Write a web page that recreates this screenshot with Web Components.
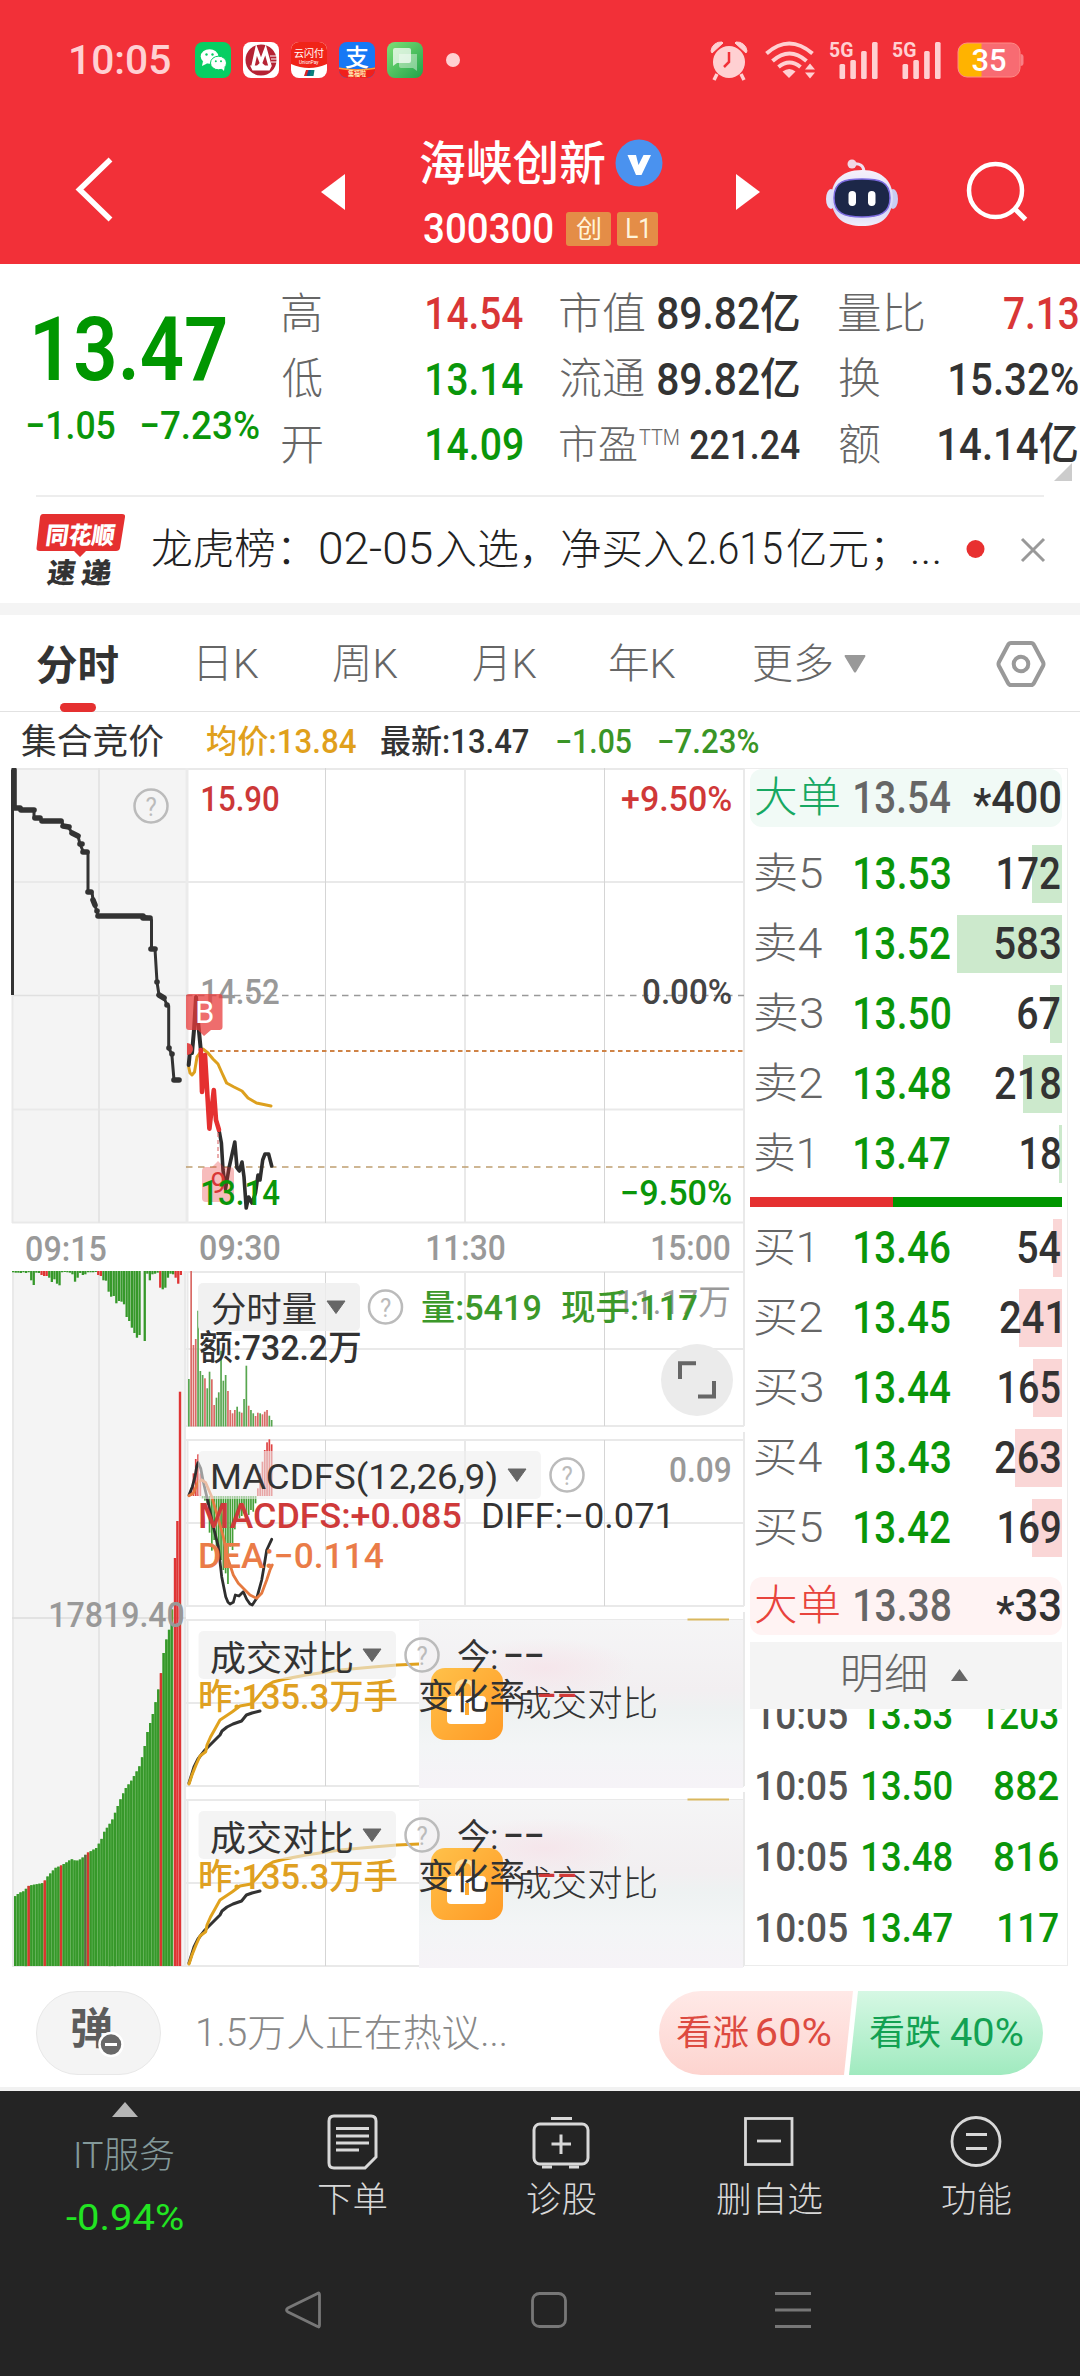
<!DOCTYPE html>
<html lang="zh-CN">
<head>
<meta charset="utf-8">
<title>海峡创新 300300</title>
<style>
html,body{margin:0;padding:0;background:#fff}
body{width:1080px;height:2376px;overflow:hidden;font-family:Roboto,"Noto Sans CJK SC",sans-serif}
</style>
</head>
<body>
<stock-page></stock-page>
<script>
const FONT = 'Roboto,"Noto Sans CJK SC",sans-serif';
const ctx = document.createElement('canvas').getContext('2d');
/* Ink extents of a run of text, used to set it to an exact width. */
function ink(text, size, weight, style = '') {
  ctx.font = `${style} ${weight} ${size}px ${FONT}`;
  const m = ctx.measureText(text);
  return { l: -m.actualBoundingBoxLeft, w: m.actualBoundingBoxRight + m.actualBoundingBoxLeft };
}
/* SVG text from x1 to x2 on a baseline. */
function T(x1, x2, y, size, text, fill, weight = 500) {
  const k = ink(text, size, weight), s = (x2 - x1) / k.w;
  return `<text transform="translate(${(x1 - k.l * s).toFixed(2)} ${y}) scale(${s.toFixed(4)} 1)" font-family='${FONT}' font-size="${size}" font-weight="${weight}" fill="${fill}">${text}</text>`;
}
function define(name, css, html) {
  const t = document.createElement('template');
  customElements.define(name, class extends HTMLElement {
    constructor() {
      super();
      const body = typeof html === 'function' ? '' : html;
      t.innerHTML = `<style>:host{display:block}*{box-sizing:border-box}svg{display:block;flex:none}.r{display:flex;align-items:center}${css}</style>${body}`;
      this.attachShadow({ mode: 'open' }).appendChild(t.content.cloneNode(true));
    }
    connectedCallback() {
      if (typeof html === 'function' && !this.done) { this.done = 1; this.shadowRoot.innerHTML += html(this); }
    }
  });
}

/* <t-fit w m s c b>: text w wide (ink), m left margin, s size, c colour, b weight */
customElements.define('t-fit', class extends HTMLElement {
  connectedCallback() {
    if (this.shadowRoot) return;
    const a = (n, d) => this.getAttribute(n) ?? d;
    const w = +a('w'), s = +a('s', 44), b = a('b', 500), st = a('i', '');
    const k = ink(this.textContent, s, b, st), f = w / k.w;
    this.attachShadow({ mode: 'open' }).innerHTML = `<style>:host{display:block;flex:none;width:${w}px;height:${s}px;margin-left:${a('m', 0)}px}
span{display:block;width:${w}px;white-space:pre;font:${st} ${b} ${s}px/${s}px ${FONT};color:${a('c', 'inherit')};transform-origin:0 50%;transform:scaleX(${f}) translateX(${-k.l}px)}</style><span><slot></slot></span>`;
  }
});

const P = '#ffd0d2';
const signal = `<svg width="51" height="38" viewBox="0 0 51 38">${T(0, 22.5, 16, 20.5, '5G', P, 700)}<g fill="${P}"><rect x="9.5" y="23" width="5.6" height="15" rx="1.5"/><rect x="20.3" y="19" width="5.6" height="19" rx="1.5"/><rect x="31.1" y="10" width="5.6" height="28" rx="1.5"/><rect x="42" y="1" width="5.6" height="37" rx="1.5"/></g></svg>`;
define('status-bar', `:host{height:120px;background:#f23038}svg{overflow:visible}.r{height:120px;color:${P}}.i{width:36px;height:36px;margin-right:12.1px}`, `
<div class="r"><t-fit m="70.5" w="99" s="41" b="500">10:05</t-fit>
<svg class="i" style="margin-left:25.5px" viewBox="0 0 36 36"><rect width="36" height="36" rx="8" fill="#07ce63"/><ellipse cx="14.5" cy="14.5" rx="8.8" ry="7.3" fill="#fff"/><path d="M8 19l-1 5 5-2.5z" fill="#fff"/><ellipse cx="23.5" cy="21" rx="8" ry="6.8" fill="#fff" stroke="#07ce63" stroke-width="1"/><path d="M26 26l3 3 .6-4z" fill="#fff"/><g fill="#07ce63"><circle cx="11.5" cy="12.5" r="1.2"/><circle cx="17.5" cy="12.5" r="1.2"/><circle cx="20.8" cy="19.3" r="1"/><circle cx="26" cy="19.3" r="1"/></g></svg>
<svg class="i" viewBox="0 0 36 36"><rect width="36" height="36" rx="8" fill="#fff"/><circle cx="18" cy="18" r="15.5" fill="#b52334"/><path d="M10 24L13.500 8L18 20L22.500 8L27 24" fill="none" stroke="#fff" stroke-width="3.400"/><path d="M7 23.500h7l4-3.500 4 3.500h7l-2.500 5H9.500z" fill="#fff"/><path d="M27 14h6M28 17h6M28 20h6" stroke="#fff"/></svg>
<svg class="i" viewBox="0 0 36 36"><rect width="36" height="36" rx="8" fill="#fff"/><path d="M0 8a8 8 0 018-8h20a8 8 0 018 8v14q-18 8-36 0z" fill="#f02418"/>${T(3, 33, 15, 10, '云闪付', '#fff', 400)}${T(8, 28, 21.500, 5, 'UnionPay', '#fff', 400)}<path d="M15 28h3l-1 6h-4z" fill="#d22"/><path d="M17.500 28h3l-1 6h-4z" fill="#15558c"/><path d="M20 28h3.500l-1 6h-4z" fill="#0b7f7c"/></svg>
<svg class="i" viewBox="0 0 36 36"><rect width="36" height="36" rx="8" fill="#1678f5"/><path d="M0 25.500q18 3 36 0v3a8 8 0 01-8 7.500H8a8 8 0 01-8-7.500z" fill="#f0201c"/><path d="M0 25.500q18 3.500 36 0v1.500q-18 3.500-36 0z" fill="#f8a03c"/>${T(6, 30, 24, 24, '支', '#fff', 500)}${T(9, 27, 34, 7, '集福啦', '#ffe9b0', 700)}</svg>
<svg class="i" viewBox="0 0 36 36"><defs><linearGradient id="m" x1="0" y1="0" x2="1" y2="1"><stop offset="0" stop-color="#7fe077"/><stop offset="1" stop-color="#20a34a"/></linearGradient></defs><rect width="36" height="36" rx="8" fill="url(#m)"/><path d="M12 12h18v17l-4-3H14q-2 0-2-2z" fill="#fff" opacity=".4"/><path d="M6 8q0-2 2-2h14q2 0 2 2v11q0 2-2 2H10l-4 3z" fill="#fff" opacity=".72"/></svg>
<svg width="16" height="16" style="margin-left:10px"><circle cx="8" cy="8" r="7" fill="${P}"/></svg>
<svg style="margin-left:248.500px" width="38" height="40" viewBox="0 0 38 40"><g fill="${P}"><circle cx="19" cy="22" r="16"/><path d="M1 11A10 10 0 0112 2L13 3 2 13zM37 11A10 10 0 0026 2L25 3 36 13z" stroke="${P}"/><path d="M7 34l-3 6M31 34l3 6" stroke="${P}" stroke-width="3.500"/></g><path d="M19 12v10l-5 5" fill="none" stroke="#f23038" stroke-width="2.500"/></svg>
<svg style="margin-left:17px" width="51" height="38" viewBox="0 0 51 38"><g fill="none" stroke="${P}" stroke-width="4"><path d="M1.500 12.500q22.500-20 46 0"/><path d="M7.500 20q17-15 34 0"/><path d="M13.500 26q11-9 22 0"/></g><path d="M17.500 30.500q7-5 13 0L24 37z" fill="${P}"/><path d="M40 28.500l5-6 5 6zM40 31.500l5 6 5-6z" fill="${P}"/></svg>
<span style="width:14px"></span>${signal}<span style="width:12px"></span>${signal}
<svg style="margin-left:13px" width="67" height="36" viewBox="0 0 67 36"><rect x="1" y="1" width="62" height="34" rx="9" fill="#f86b72"/><path d="M24.500 1H10a9 9 0 00-9 9v16a9 9 0 009 9h14.500z" fill="#ffb300"/><rect x="1" y="1" width="62" height="34" rx="9" fill="none" stroke="#ff8b85" stroke-width="1"/><path d="M63.500 12q3 0 3 3v6q0 3-3 3z" fill="#f87f85"/>${T(15.500, 49, 29, 31, '35', '#fff', 500)}</svg></div>`);

define('title-bar', `:host{height:144px;background:#f23038;color:#fff}.r{height:144px;align-items:flex-start}.c{width:251px;margin-left:73px}.tag{display:flex;align-items:center;height:34px;background:#e48d47;border-radius:3px;color:#fff4da}`, `
<div class="r"><svg style="margin:36px 0 0 74px" width="42" height="66" viewBox="0 0 42 66"><path d="M36.500 3.500L5.500 33.500 36.500 63.500" fill="none" stroke="#fff" stroke-width="5.500"/></svg>
<svg style="margin:54px 0 0 205px" width="25" height="36"><path d="M0 18L24 0V36z" fill="#fff"/></svg>
<div class="c"><div class="r" style="height:48px;margin-top:19px;align-items:center"><t-fit m="1" w="185" s="47" b="500">海峡创新</t-fit><svg width="48" height="48" style="margin-left:10px"><circle cx="24" cy="24" r="23.500" fill="#4a92ef"/><path d="M12.500 16H21l2.500 10L28.500 16H36L26.500 36H21z" fill="#fff"/></svg></div>
<div class="r" style="height:36px;margin-top:24px;align-items:center"><t-fit m="4.500" w="128.500" s="42" b="500">300300</t-fit><div class="tag" style="width:45px;margin-left:14px"><t-fit m="10" w="24" s="25" b="400">创</t-fit></div><div class="tag" style="width:41px;margin-left:6px"><t-fit m="10" w="20" s="28" b="400">L1</t-fit></div></div></div>
<svg style="margin:54px 0 0 65.500px" width="25" height="36"><path d="M24 18L0 0V36z" fill="#fff"/></svg>
<svg style="margin:39px 0 0 65px" width="72" height="70" viewBox="0 0 72 70"><defs><linearGradient id="h" x1="0" y1="0" x2="0" y2="1"><stop offset="0" stop-color="#f6f0fb"/><stop offset=".7" stop-color="#d4d6f5"/><stop offset="1" stop-color="#f1eefb"/></linearGradient></defs><path d="M26 5q12-2 12 9" fill="none" stroke="#efdff0" stroke-width="3"/><circle cx="26" cy="5" r="4.500" fill="#f1d9e6"/><ellipse cx="5" cy="40" rx="5" ry="10" fill="#dfe2fa"/><ellipse cx="67" cy="40" rx="5" ry="10" fill="#c9cdf2"/><path d="M36 11C58 11 67 24 67 40 65 60 54 67 36 67 18 67 7 60 5 40 5 24 14 11 36 11z" fill="url(#h)"/><path d="M36 20C53 20 64 22 64 39 64 54 54 58 36 58 18 58 8 54 8 39 8 22 19 20 36 20z" fill="#1c2748" stroke="#7c6be0" stroke-width="1.500"/><rect x="22.500" y="32" width="7.500" height="15" rx="3.700" fill="#fff"/><rect x="42" y="32" width="7.500" height="15" rx="3.700" fill="#fff"/></svg>
<svg style="margin:40px 0 0 67px" width="64" height="64" viewBox="0 0 64 64"><circle cx="30.500" cy="30.500" r="26.500" fill="none" stroke="#fff" stroke-width="4.500"/><path d="M49 48L60.500 59.500" stroke="#fff" stroke-width="5"/></svg></div>`);

const G = '#0a960a', R = '#d93636', D = '#333', L = '#666';
define('quote-panel', `:host{height:232px}.m{display:flex;height:231px}.l{width:282px}.col{padding-top:17.500px}.col .r{height:65.500px}.line{margin:0 36px;height:2px;background:#ededed}.corner{position:absolute;left:1054px;top:463px}`, `
<div class="m"><div class="l"><div class="r" style="height:88px;margin-top:41px"><t-fit m="35" w="191" s="89" b="600" c="#009600">13.47</t-fit></div><div class="r" style="height:40px;margin-top:13px"><t-fit m="27.500" w="86.500" s="39.500" c="${G}">−1.05</t-fit><t-fit m="28" w="117" s="39.500" c="${G}">−7.23%</t-fit></div></div>
<div class="col" style="width:240px"><div class="r"><t-fit w="39" s="43" b="300" c="${L}">高</t-fit><t-fit m="105.500" w="95.500" c="${R}">14.54</t-fit></div><div class="r"><t-fit w="40" s="43" b="300" c="${L}">低</t-fit><t-fit m="104.500" w="95.500" c="${G}">13.14</t-fit></div><div class="r"><t-fit w="40" s="43" b="300" c="${L}">开</t-fit><t-fit m="104.500" w="95.500" c="${G}">14.09</t-fit></div></div>
<div class="col" style="width:278px;padding-left:38px"><div class="r"><t-fit w="84" s="43" b="300" c="${L}">市值</t-fit><t-fit m="14" w="141" c="${D}">89.82亿</t-fit></div><div class="r"><t-fit w="84" s="43" b="300" c="${L}">流通</t-fit><t-fit m="14" w="141" c="${D}">89.82亿</t-fit></div><div class="r"><t-fit w="77" s="39" b="300" c="${L}">市盈</t-fit><t-fit m="2" w="40" s="22" b="300" c="${L}" style="margin-bottom:14px">TTM</t-fit><t-fit m="11" w="110" s="41" c="${D}">221.24</t-fit></div></div>
<div class="col" style="padding-left:39px"><div class="r"><t-fit w="85" s="43" b="300" c="${L}">量比</t-fit><t-fit m="80" w="74" c="${R}">7.13</t-fit></div><div class="r"><t-fit w="41" s="43" b="300" c="${L}">换</t-fit><t-fit m="70" w="128" c="${D}">15.32%</t-fit></div><div class="r"><t-fit w="41" s="43" b="300" c="${L}">额</t-fit><t-fit m="59" w="138" c="${D}">14.14亿</t-fit></div></div></div>
<div class="line"></div><svg class="corner" width="18" height="18"><path d="M18 0V18H0z" fill="#ccc"/></svg>`);

define('news-strip', `:host{height:119px}svg{overflow:visible}.r{height:107px}.b{height:12px;background:#f4f4f4}`, `
<div class="r"><svg style="margin-left:36px" width="90" height="74" viewBox="0 0 90 74"><path d="M6 1H86q3.500 0 3 3L84 35q-.6 3-4 3H50l-6 6-6-6H4q-4 0-3.500-3L4 4q.6-3 3-3z" fill="#e53030"/><g transform="skewX(-8)">${T(14, 82, 31, 24, '同花顺', '#fff', 900)}${T(20, 48, 70, 28, '速', '#333', 900)}${T(54, 84, 70, 28, '递', '#333', 900)}</g></svg>
<t-fit m="26" w="138" s="41.500" b="300" c="#222">龙虎榜：</t-fit><t-fit m="30" w="112" s="43.500" b="300" c="#222">02-05</t-fit><t-fit m="4" w="96" s="41.500" b="300" c="#222">入选，</t-fit><t-fit m="30" w="121" s="41.500" b="300" c="#222">净买入</t-fit><t-fit m="5" w="94" s="43.500" b="300" c="#222">2.615</t-fit><t-fit m="5" w="96" s="41.500" b="300" c="#222">亿元；</t-fit><t-fit m="30" w="26" s="42" b="300" c="#222">...</t-fit>
<svg style="margin-left:27px" width="80" height="30"><circle cx="9.500" cy="14" r="9" fill="#e83030"/><path d="M56 4L78 26M78 4L56 26" stroke="#999" stroke-width="3"/></svg></div><div class="b"></div>`);

define('period-tabs', `:host{height:97px;border-bottom:1.500px solid #e2e2e2}.r{height:98px}.on{height:96px;width:81px;margin-left:37px;display:flex;flex-direction:column;align-items:center}.bar{width:36px;height:9px;border-radius:5px;background:#e53030;margin-top:16px;margin-right:0}`, `
<div class="r"><div class="on"><t-fit style="margin-top:30px" w="81" s="41" b="700" c="#333">分时</t-fit><div class="bar"></div></div>
<t-fit m="81" w="60" s="41" b="300" c="${L}">日K</t-fit><t-fit m="74" w="65" s="41" b="300" c="${L}">周K</t-fit><t-fit m="75" w="64" s="41" b="300" c="${L}">月K</t-fit><t-fit m="73" w="66" s="41" b="300" c="${L}">年K</t-fit><t-fit m="78" w="78" s="41" b="300" c="${L}">更多</t-fit>
<svg style="margin-left:12px" width="22" height="18"><path d="M1 0H21q1 1 0 2L12 17q-1 1-2 0L1 2q-1-1 0-2z" fill="#999"/></svg>
<svg style="margin-left:130px" width="50" height="48" viewBox="0 0 50 48"><path d="M15 3H35q2 0 3 2L47 22q1 2 0 4L38 43q-1 2-3 2H15q-2 0-3-2L3 26q-1-2 0-4L12 5q1-2 3-2z" fill="none" stroke="#999" stroke-width="4"/><circle cx="25" cy="24" r="7.300" fill="none" stroke="#999" stroke-width="4"/></svg></div>`);

define('chart-legend', `:host{height:56px}.r{height:61px}`, `
<div class="r"><t-fit m="22" w="141" s="35" b="400" c="#333">集合竞价</t-fit><t-fit m="44" w="149" s="32.500" b="500" c="#e0a01c">均价:13.84</t-fit><t-fit m="25" w="148" s="32.500" b="500" c="#333">最新:13.47</t-fit><t-fit m="27.500" w="74.500" s="32.500" c="#3a9526">−1.05</t-fit><t-fit m="28" w="99.500" s="32.500" c="#3a9526">−7.23%</t-fit></div>`);

/* All chart drawings share the page's coordinate space through their viewBox. */
const svg = (x, y, w, h, body) => `<svg width="${w}" height="${h}" viewBox="${x} ${y} ${w} ${h}">${body}</svg>`;
const line = (x1, y1, x2, y2, c = '#e9e9e9', w = 2, d = '') => `<path d="M${x1} ${y1}L${x2} ${y2}" stroke="${c}" stroke-width="${w}" ${d ? `stroke-dasharray="${d}"` : ''} fill="none"/>`;
const poly = (p, c, w) => `<polyline points="${p}" fill="none" stroke="${c}" stroke-width="${w}" stroke-linejoin="round" stroke-linecap="round"/>`;
const help = (x, y) => `<circle cx="${x}" cy="${y}" r="16.500" fill="none" stroke="#bbb" stroke-width="2.500"/>` + T(x - 5.500, x + 5.500, y + 9.500, 26, '?', '#bbb', 400);

define('price-chart', `:host{height:502px}`, () => {
  let o = `<rect x="12" y="768" width="176" height="455" fill="#f4f4f4"/>`;
  for (const y of [769, 882, 1109.500, 1222.500]) o += line(12, y, 744, y);
  o += line(12, 995.500, 188, 995.500, '#e0e0e0', 1.500) + line(12.500, 768, 12.500, 1223) + line(99, 768, 99, 1223, '#e5e5e5') + line(187, 768, 187, 1223, '#ebebeb', 3);
  o += line(325.500, 768, 325.500, 1223, '#d5d5d5', 1) + line(465, 768, 465, 1223) + line(604.500, 768, 604.500, 1223, '#d5d5d5', 1) + line(744, 768, 744, 1270);
  o += line(186, 995.500, 744, 995.500, '#999', 1.600, '6.500 5.500') + line(210, 1051, 744, 1051, '#cf8346', 2, '4.500 3.500') + line(186, 1167, 744, 1167, '#bf9f70', 1.600, '6.500 5.500');
  const a = '14,770 14,808 21,808 21,810 34,810 34,818 40,818 42,821 62,821 63,826 69,828 72,833 78,836 80,844 83,851 88,852 88,892 92,892 93,900 95,906 97,911 98,916 143,916 150,918 151.500,920 151.500,949 155,949 157,982 159,995 164,998 167,1005 168.700,1006 168.700,1048 171.800,1054 174,1080 179,1080';
  o += line(12.500, 770, 12.500, 995, '#333', 3) + poly(a, '#333', 3);
  for (const [x1, y1, x2, y2] of [[14, 770, 14, 806], [14, 808, 20, 808], [21, 810, 34, 810], [35, 818, 40, 818], [42, 821, 61, 821], [63, 826, 69, 827], [72, 833, 78, 836], [80, 844, 82, 844], [83, 852, 87, 852], [88, 892, 91, 892], [93, 900, 95, 905], [97, 911, 97, 911], [98, 916, 143, 916], [143, 918, 150, 918], [151, 949, 155, 949], [157, 982, 157, 982], [159, 995, 164, 998], [167, 1005, 167, 1005], [169, 1048, 169, 1048], [172, 1054, 172, 1054], [174, 1080, 179, 1080]]) o += poly(`${x1},${y1} ${x2},${y2}`, '#333', 5.600);
  o += T(202, 279, 1004, 35, '14.52', '#999');
  o += poly('188.700,1067 190,1073 192,1075 194.500,1072 197,1057 203,1049 208,1053 213,1059 218,1064 222,1073 226.600,1083 234,1087 242,1091 248,1098 256.500,1103 271,1106', '#dda01e', 3);
  o += poly('188.700,1065 190.400,1047 192,1053 194,1030 196,997 198.400,1025 200.800,1050', '#2e2e2e', 4) + poly('219,1130 221.400,1143 223,1170 225.500,1189 229,1168 234.800,1142 237,1168 239.300,1171 242,1162 244,1177 246.200,1208 248.600,1197 252,1203 255.500,1193 258,1175 260,1180 262.700,1160 265,1154 268.600,1154 271.700,1166', '#2e2e2e', 3.600);
  o += poly('200.800,1050 202,1092 205,1055 209.400,1128.700 213.800,1090 216,1120 219,1130', '#e53030', 4.600);
  o += `<path d="M186 1043a6 6 0 010 12z" transform="translate(1 0)" fill="#e04848"/>` + line(218, 1133, 218, 1160, '#e08080', 1.300, '4 3');
  o += `<path d="M189 994H219.500q3 0 3 3V1027q0 3-3 3H211l-7 6-6-6H189q-3 0-3-3V997q0-3 3-3z" fill="#e83a3a" opacity=".74"/>` + T(197, 213, 1023, 31, 'B', '#fff', 400);
  o += `<path d="M206 1167H212l6-6 6 6H230q4 0 4 4V1198q0 4-4 4H206q-4 0-4-4V1171q0-4 4-4z" fill="#e53030" opacity=".32"/>` + T(211.500, 225, 1193, 29, '9', '#d93636', 400);
  o += T(202, 279, 811, 35, '15.90', '#cc3838') + T(202, 280, 1204.500, 35, '13.14', G) + T(622, 731.500, 811, 35, '+9.50%', '#d03838') + T(643, 731.500, 1004, 35, '0.00%', '#444') + T(622, 731.500, 1205, 35, '−9.50%', G) + help(151, 806);
  o += T(26, 106, 1261, 35, '09:15', '#999') + T(200, 280, 1260, 35, '09:30', '#999') + T(427, 505, 1260, 35, '11:30', '#999') + T(652, 730, 1260, 35, '15:00', '#999');
  return svg(0, 768, 746, 502, o);
});

define('auction-volume', `:host{width:186px;height:696px}`, () => {
  const g = '#36982a', r = '#df3434';
  let o = `<rect x="12" y="1271" width="174" height="695" fill="#f4f4f4"/>` + line(13, 1271, 13, 1966) + line(99, 1271, 99, 1966, '#e5e5e5') + line(185.500, 1271, 185.500, 1966, '#e9e9e9', 3) + line(12, 1618, 186, 1618, '#dcdcdc', 1.500) + line(12, 1966, 186, 1966);
  const top = [4, 5, 5, 6, 4, 6, 4, 28, 42, 5, 6, -12, -15, -15, 20, 33, 25, 38, 43, 4, 3, 4, 5, 10, 32, 20, 6, 12, 10, 4, 4, 4, 3, -12, -15, 28, 29, 62, 77, 75, 97, 90, 92, 100, 138, 150, 170, 186, 200, 192, 0, 210, 8, 28, 10, 8, 5, -50, 55, 50, 20, 8, 10, -20, -38, -12];
  top.forEach((v, i) => { const x = 12 + i * 2.58; o += `<rect x="${x.toFixed(1)}" y="1271" width="2.300" height="${(Math.abs(v) / 3).toFixed(1)}" fill="${v < 0 ? r : g}"/>`; });
  const pt = [[10, 1900], [14, 1897], [19, 1893], [24, 1891], [28, 1886], [32, 1885], [43, 1883], [47, 1877], [55, 1868], [60, 1866], [65.500, 1863], [71, 1859], [76, 1861], [81, 1859], [87, 1853], [91, 1851], [96, 1848], [101, 1840], [104, 1832], [112, 1820], [120, 1800], [125, 1789], [131.600, 1780], [139, 1767], [143.500, 1752], [147, 1733], [153, 1713], [157, 1695], [160, 1680], [162.700, 1657], [166.500, 1638], [170, 1626], [172.500, 1600]];
  const at = x => { for (let i = 1; i < pt.length; i++) if (x <= pt[i][0]) { const [a, b] = pt[i - 1], [c, d] = pt[i]; return b + (d - b) * (x - a) / (c - a); } return 1600; };
  for (let i = 0; i < 59; i++) {
    const x = 14 + i * 2.7, y = at(x + 1), red = [5, 11, 17, 27, 54].includes(i), strong = [11, 27, 54].includes(i), edge = i === 26;
    o += `<rect x="${x.toFixed(1)}" y="${y.toFixed(1)}" width="2.700" height="${(1966 - y).toFixed(1)}" fill="${red ? (strong ? '#dc4a40' : '#a8603c') : '#63b556'}"/><rect x="${x.toFixed(1)}" y="${y.toFixed(1)}" width="2.100" height="${(1966 - y).toFixed(1)}" fill="${red ? '#d8362f' : edge ? '#5c6646' : g}"/>`;
  }
  for (const [x, y] of [[173.800, 1558], [176.200, 1521], [178.800, 1391.700]]) o += `<rect x="${x}" y="${y}" width="2.400" height="${1966 - y}" fill="${r}"/>`;
  return svg(0, 1270, 186, 697, o + T(50, 184, 1627, 35, '17819.40', '#999'));
});

const grid = (t, m, b) => line(186, t, 744, t) + line(186, m, 744, m) + line(186, b, 744, b) + line(187.500, t, 187.500, b) + line(325.500, t, 325.500, b, '#d5d5d5', 1) + line(465, t, 465, b) + line(604.500, t, 604.500, b, '#d5d5d5', 1) + line(744, t - 14, 744, b);
const pill = (x1, x2, y) => `<rect x="${x1}" y="${y}" width="${x2 - x1}" height="48" rx="5" fill="#eee" opacity=".82"/>`;
const caret = (x, y) => `<path d="M${x} ${y}h18l-9 12.500z" fill="#666" stroke="#666" stroke-linejoin="round"/>`;

define('volume-chart', `:host{height:162px}`, () => {
  let o = grid(1272, 1349, 1426);
  const v = [357, -33, -255, -237, 152, 333, 345, -355, 385, 335, -358, -435, 413, 397, 272, 362, 345, -393, -450, -460, -450, 440, 455, -458, 417, 317, -437, 450, 460, -468, -458, 460, -463, -455, -450, 467, 480];
  v.forEach((p, i) => { const y = 1260 + Math.abs(p) / 3; o += `<rect x="${(188 + i * 2.3).toFixed(1)}" y="${y.toFixed(1)}" width="1.700" height="${(1426.500 - y).toFixed(1)}" fill="${p < 0 ? '#d96a66' : '#58a650'}"/>`; });
  o += pill(198, 360, 1283) + T(212, 316, 1321.500, 35, '分时量', '#333', 400) + caret(327, 1301) + help(385.500, 1307);
  o += T(200, 360, 1360, 35, '额:732.2万', '#333', 500) + T(618, 729, 1314, 34, '11.17万', '#999', 400) + T(422, 540, 1320, 35, '量:5419', '#3c982a', 500) + T(562, 697, 1320, 35, '现手:117', '#3c982a', 500);
  o += `<circle cx="697" cy="1380" r="36" fill="#ebebeb"/><path d="M680 1379V1363.300H696M714 1381V1396.500H698" fill="none" stroke="#666" stroke-width="4"/>`;
  return svg(186, 1270, 560, 162, o);
});

define('macd-chart', `:host{height:180px}`, () => {
  let o = grid(1440, 1523, 1606);
  const v = [0, 685, 640, 597, 583, 640, 715, 722, 735, 818, 872, 840, 860, 862, 900, 930, 940, 972, 860, 870, 808, 782, 775, 768, 760, 758, 765, 750, 755, 730, 685, 640, 605, 570, 547, 538, 553];
  v.forEach((p, i) => { if (!p) return; const y = 1260 + p / 3, x = (188 + i * 2.3).toFixed(1); o += y < 1496 ? `<rect x="${x}" y="${y}" width="1.700" height="${1496 - y}" fill="#df4444"/>` : `<rect x="${x}" y="1496" width="1.700" height="${y - 1496}" fill="#45a038"/>`; });
  const q = s => s.map(([x, y]) => (x / 3).toFixed(1) + ',' + (1260 + y / 3).toFixed(1)).join(' ');
  o += poly(q([[567, 705], [577, 680], [585, 650], [590, 620], [594, 608], [602, 625], [610, 665], [625, 730], [640, 800], [655, 860], [665, 950], [677, 1010], [684, 1027], [690, 1032], [700, 1027], [706, 1005], [717, 1008], [730, 995], [740, 1018], [750, 1032], [757, 1035], [770, 1015], [785, 960], [792, 920], [800, 870], [815, 838]]), '#2e2e2e', 2.800);
  o += poly(q([[567, 707], [580, 700], [595, 665], [605, 660], [617, 668], [635, 710], [650, 760], [670, 830], [682, 890], [700, 945], [715, 970], [735, 990], [750, 1005], [770, 1015], [785, 1000], [800, 960], [810, 930], [817, 915]]), '#e5793f', 2.800);
  o += `<rect x="198" y="1451" width="343" height="48" rx="5" fill="#eee" opacity=".58"/>` + T(212, 496, 1489, 35, 'MACDFS(12,26,9)', '#333', 400) + caret(508, 1469) + help(567, 1475) + T(670, 730, 1482, 35, '0.09', '#999');
  o += T(200, 461, 1528, 35, 'MACDFS:+0.085', '#cf3a3a', 500) + T(483, 668, 1528, 35, 'DIFF:−0.071', '#333', 400) + T(200, 384, 1568, 35, 'DEA:−0.114', '#ea7c48', 500);
  return svg(186, 1432, 560, 180, o);
});

define('compare-chart', `:host{height:180px}`, () => {
  let o = `<defs><linearGradient id="o" x1="0" y1="0" x2="1" y2="1"><stop offset="0" stop-color="#ffc14a"/><stop offset="1" stop-color="#ff9a25"/></linearGradient><linearGradient id="w" x1="0" y1="0" x2="0" y2="1"><stop offset="0" stop-color="#f5f5f6"/><stop offset=".42" stop-color="#f2eff1"/><stop offset=".55" stop-color="#eef2f2"/><stop offset=".75" stop-color="#f3f5f6"/><stop offset="1" stop-color="#f6f3f7"/></linearGradient><radialGradient id="k"><stop offset="0" stop-color="#f6e3e9" stop-opacity=".8"/><stop offset="1" stop-color="#f6e3e9" stop-opacity="0"/></radialGradient></defs>`;
  o += grid(1620, 1703, 1786);
  const y = '189,1784 192,1775 196,1765 200,1756 205.700,1751.700 207,1745 210.500,1737 215,1729 220,1720 232,1712 240,1706 251,1704 256,1699 261,1693 266,1686 273,1682 285,1679 306,1675 340,1670 373,1667 397,1665 419,1664';
  o += poly('189,1783 194,1767 198,1759 205,1750 210,1745 220,1735 222,1731 227,1727 233,1724 241.600,1721 246.400,1715 252,1713 260,1711', '#333', 3) + poly(y, '#e0a21e', 3);
  o += `<rect x="419" y="1620" width="324" height="168" fill="url(#w)"/><ellipse cx="545" cy="1668" rx="90" ry="30" fill="url(#k)"/>` + line(687.500, 1619.500, 729, 1619.500, '#d9b75e', 2);
  o += `<rect x="198.500" y="1631" width="197.500" height="48" rx="5" fill="#eee" opacity=".62"/>` + T(211, 352, 1670.500, 35, '成交对比', '#333', 400) + caret(363, 1649);
  o += `<rect x="431" y="1668" width="72" height="72" rx="14" fill="url(#o)"/><path d="M457 1697v-8q0-8 8-8t8 8v8" fill="none" stroke="#ffe1a0" stroke-width="4"/><rect x="447" y="1696" width="39" height="28" rx="4" fill="#fff"/><path d="M467 1703v12" stroke="#ffa930" stroke-width="4"/>`;
  o += help(422, 1655) + T(458, 497, 1669, 35, '今:', '#333', 400) + T(505, 543, 1666, 35, '--', '#333', 500) + T(200, 397, 1708.500, 35, '昨:135.3万手', '#dfa022', 500) + T(419, 532, 1709, 35, '变化率:', '#333', 400) + T(517, 656, 1716, 35, '成交对比', '#333', 300) + T(538, 576, 1706, 35, '--', '#d03838', 500);
  return svg(186, 1612, 560, 180, o);
});

const W = { '172': 62, '583': 65, '67': 42, '218': 65, '18': 39, '54': 42, '241': 60, '165': 61, '263': 65, '169': 61 };
define('book-row', `:host{height:70px}.r{width:312px;height:58px}`, e => {
  const [n, p, v, b] = ['n', 'p', 'v', 'b'].map(k => e.getAttribute(k)), w = W[v];
  const k = n[1] === '1' ? 56 : 67, c = n[0] === '卖' ? '#cce9cc' : '#fad6d6';
  return `<div class="r" style="background:linear-gradient(${c},${c}) right/${b}px 100% no-repeat"><t-fit m="5" w="${k}" s="42" b="300" c="${L}">${n}</t-fit><t-fit m="${100 - k}" w="95" c="#0a960a">${p}</t-fit><t-fit m="${110 - w}" w="${w}" c="#333">${v}</t-fit></div>`;
});
define('order-book', `:host{width:324px;height:1198px;border:1.500px solid #ececec;border-width:1.500px 1.500px 1.500px 0}.in{margin-left:6px;width:312px}.star{font-style:normal;position:relative;top:7px}.big{height:58px;border-radius:12px}.ratio{display:flex;height:10px;margin:2px 0 12px}.ratio i{height:10px}.hd{height:66.500px;background:#f4f4f4;margin-top:7px}.tape{height:255px;overflow:hidden}.tape .r{height:71px}.tape .r:first-child{margin-top:-28.500px}`, `
<div class="in"><div class="r big" style="background:#f1faf6;margin-bottom:18px"><t-fit m="5" w="84" s="42" b="300" c="#16a862">大单</t-fit><t-fit m="16" w="95" c="#666">13.54</t-fit><t-fit m="23" w="87" c="#333"><i class="star">*</i>400</t-fit></div>
<book-row n="卖5" p="13.53" v="172" b="30"></book-row><book-row n="卖4" p="13.52" v="583" b="105"></book-row><book-row n="卖3" p="13.50" v="67" b="12"></book-row><book-row n="卖2" p="13.48" v="218" b="39"></book-row><book-row n="卖1" p="13.47" v="18" b="3"></book-row>
<div class="ratio"><i style="width:143px;background:#e53030"></i><i style="flex:1;background:#009600"></i></div>
<book-row n="买1" p="13.46" v="54" b="9"></book-row><book-row n="买2" p="13.45" v="241" b="43"></book-row><book-row n="买3" p="13.44" v="165" b="29"></book-row><book-row n="买4" p="13.43" v="263" b="47"></book-row><book-row n="买5" p="13.42" v="169" b="30"></book-row>
<div class="r big" style="background:#fff3f3;margin-top:8px"><t-fit m="5" w="84" s="42" b="300" c="#e8433c">大单</t-fit><t-fit m="16" w="95" c="#666">13.38</t-fit><t-fit m="46" w="64" c="#333"><i class="star">*</i>33</t-fit></div>
<div class="r hd"><t-fit m="93" w="82" s="42" b="300" c="#666">明细</t-fit><svg style="margin-left:26px" width="17" height="12"><path d="M0 12L8.500 0 17 12z" fill="#666"/></svg></div>
<div class="tape"><div class="r"><t-fit m="7" w="90" s="41" c="#555">10:05</t-fit><t-fit m="16" w="89" s="41" c="${G}">13.53</t-fit><t-fit m="30" w="76" s="41" c="${G}">1203</t-fit></div><div class="r"><t-fit m="7" w="90" s="41" c="#555">10:05</t-fit><t-fit m="16" w="89" s="41" c="${G}">13.50</t-fit><t-fit m="43" w="63" s="41" c="${G}">882</t-fit></div><div class="r"><t-fit m="7" w="90" s="41" c="#555">10:05</t-fit><t-fit m="16" w="89" s="41" c="${G}">13.48</t-fit><t-fit m="43" w="63" s="41" c="${G}">816</t-fit></div><div class="r"><t-fit m="7" w="90" s="41" c="#555">10:05</t-fit><t-fit m="16" w="89" s="41" c="${G}">13.47</t-fit><t-fit m="47" w="59" s="41" c="${G}">117</t-fit></div></div></div>`);

define('discuss-bar', `:host{height:125px}.r{height:121px}.band{height:4px;background:#f1f1f1}.dan{display:flex;align-items:center;width:125px;height:84px;margin:13px 0 0 36px;border-radius:42px;background:#f4f4f4;border:1px solid #e8e8e8}.v{margin:13px 0 0 154px}`, `
<div class="r" style="align-items:center"><div class="dan"><svg width="123" height="82" viewBox="0 0 123 82">${T(35, 75, 52, 43, '弹', '#5c5c5c', 700)}<circle cx="74" cy="52.500" r="11.500" fill="#696969" stroke="#fff" stroke-width="2.500"/><path d="M68 52.500h12" stroke="#fff" stroke-width="3"/></svg></div>
<t-fit m="37" style="margin-top:12px" w="307" s="38" b="300" c="#888">1.5万人正在热议...</t-fit>
<svg class="v" width="384" height="84" viewBox="0 0 384 84"><defs><linearGradient id="a" x1="0" y1="0" x2="0" y2="1"><stop offset="0" stop-color="#ffe9e7"/><stop offset="1" stop-color="#fdd4cf"/></linearGradient><linearGradient id="b" x1="0" y1="0" x2="0" y2="1"><stop offset="0" stop-color="#d6f8e4"/><stop offset="1" stop-color="#a0eabf"/></linearGradient></defs><path d="M42 0H194L185 84H42A42 42 0 0142 0z" fill="url(#a)"/><path d="M199 0H342A42 42 0 01342 84H190z" fill="url(#b)"/>${T(18, 89, 54, 35, '看涨', '#dd4a40', 400)}${T(98, 172, 54.500, 38, '60%', '#dd4a40', 400)}${T(211, 281, 54, 35, '看跌', '#12a152', 400)}${T(291, 364, 54.500, 38, '40%', '#12a152', 400)}</svg></div><div class="band"></div>`);

define('tool-bar', `:host{height:179px;background:#242424}.r{align-items:flex-start}.c{width:208px;display:flex;flex-direction:column;align-items:center;color:#d8d8d8}.c svg{margin-top:20px}.c t-fit{margin-top:13px}.f{width:249px}`, `
<div class="r"><div class="c f"><svg style="margin-top:11px" width="26" height="15"><path d="M0 15L13 0 26 15z" fill="#b5b5b5"/></svg><t-fit style="margin-top:21px" w="98" s="36" b="300" c="#83999a">IT服务</t-fit><t-fit style="margin-top:25px" w="117" s="37" b="400" c="#22e422">-0.94%</t-fit></div>
<div class="c"><svg width="54" height="62" viewBox="0 0 54 62"><g fill="none" stroke="#d8d8d8" stroke-width="3"><path d="M8 5H45q5 0 5 5V46L39 57H8q-5 0-5-5V10q0-5 5-5z"/><path d="M10 17.500H43M10 25H43M10 32H43M10 39H33"/></g></svg><t-fit style="margin-top:10px" w="68" s="35" b="300">下单</t-fit></div>
<div class="c"><svg width="62" height="62" viewBox="0 0 62 62"><g fill="none" stroke="#d8d8d8" stroke-width="3"><rect x="4" y="13" width="54" height="40" rx="6"/><path d="M21 7.500H42M12 56h10M39 56h10M31 23.500V43M21.500 33H41"/></g></svg><t-fit style="margin-top:10px" w="69" s="35" b="300">诊股</t-fit></div>
<div class="c"><svg width="62" height="62" viewBox="0 0 62 62"><g fill="none" stroke="#d8d8d8" stroke-width="2.800"><rect x="7.500" y="7.500" width="46.500" height="46"/><path d="M19 30H43"/></g></svg><t-fit style="margin-top:10px" w="105" s="35" b="300">删自选</t-fit></div>
<div class="c" style="width:206px"><svg width="62" height="62" viewBox="0 0 62 62"><g fill="none" stroke="#d8d8d8" stroke-width="2.800"><circle cx="31" cy="30.500" r="24"/><path d="M21 23.500H42M21 37.500H42"/></g></svg><t-fit style="margin-top:10px" w="69" s="35" b="300">功能</t-fit></div></div>`);

define('system-nav', `:host{height:106px;background:#242424}.r{height:80px}`, `
<div class="r"><svg style="margin-left:284px" width="38" height="40" viewBox="0 0 38 40"><path d="M33.500 3.500Q35.500 2 35.500 5V35q0 3-2 1.500L4 22q-3-2 0-4z" fill="none" stroke="#777" stroke-width="2.800"/></svg>
<svg style="margin-left:208px" width="38" height="40" viewBox="0 0 38 40"><rect x="2.500" y="3.500" width="33" height="33" rx="7" fill="none" stroke="#777" stroke-width="2.800"/></svg>
<svg style="margin-left:207px" width="36" height="40" viewBox="0 0 36 40"><path d="M0 3.500H36M0 20H36M0 36.500H36" stroke="#777" stroke-width="3"/></svg></div>`);

define('stock-page', `:host{width:1080px}.main{display:flex;height:1198px}.left{width:744px;height:1198px}.low{display:flex}`, `
<status-bar></status-bar><title-bar></title-bar><quote-panel></quote-panel><news-strip></news-strip><period-tabs></period-tabs><chart-legend></chart-legend>
<div class="main"><div class="left"><price-chart></price-chart><div class="low"><auction-volume></auction-volume><div><volume-chart></volume-chart><macd-chart></macd-chart><compare-chart></compare-chart><compare-chart></compare-chart></div></div></div><order-book></order-book></div>
<discuss-bar></discuss-bar><tool-bar></tool-bar><system-nav></system-nav>`);
</script>
</body>
</html>
